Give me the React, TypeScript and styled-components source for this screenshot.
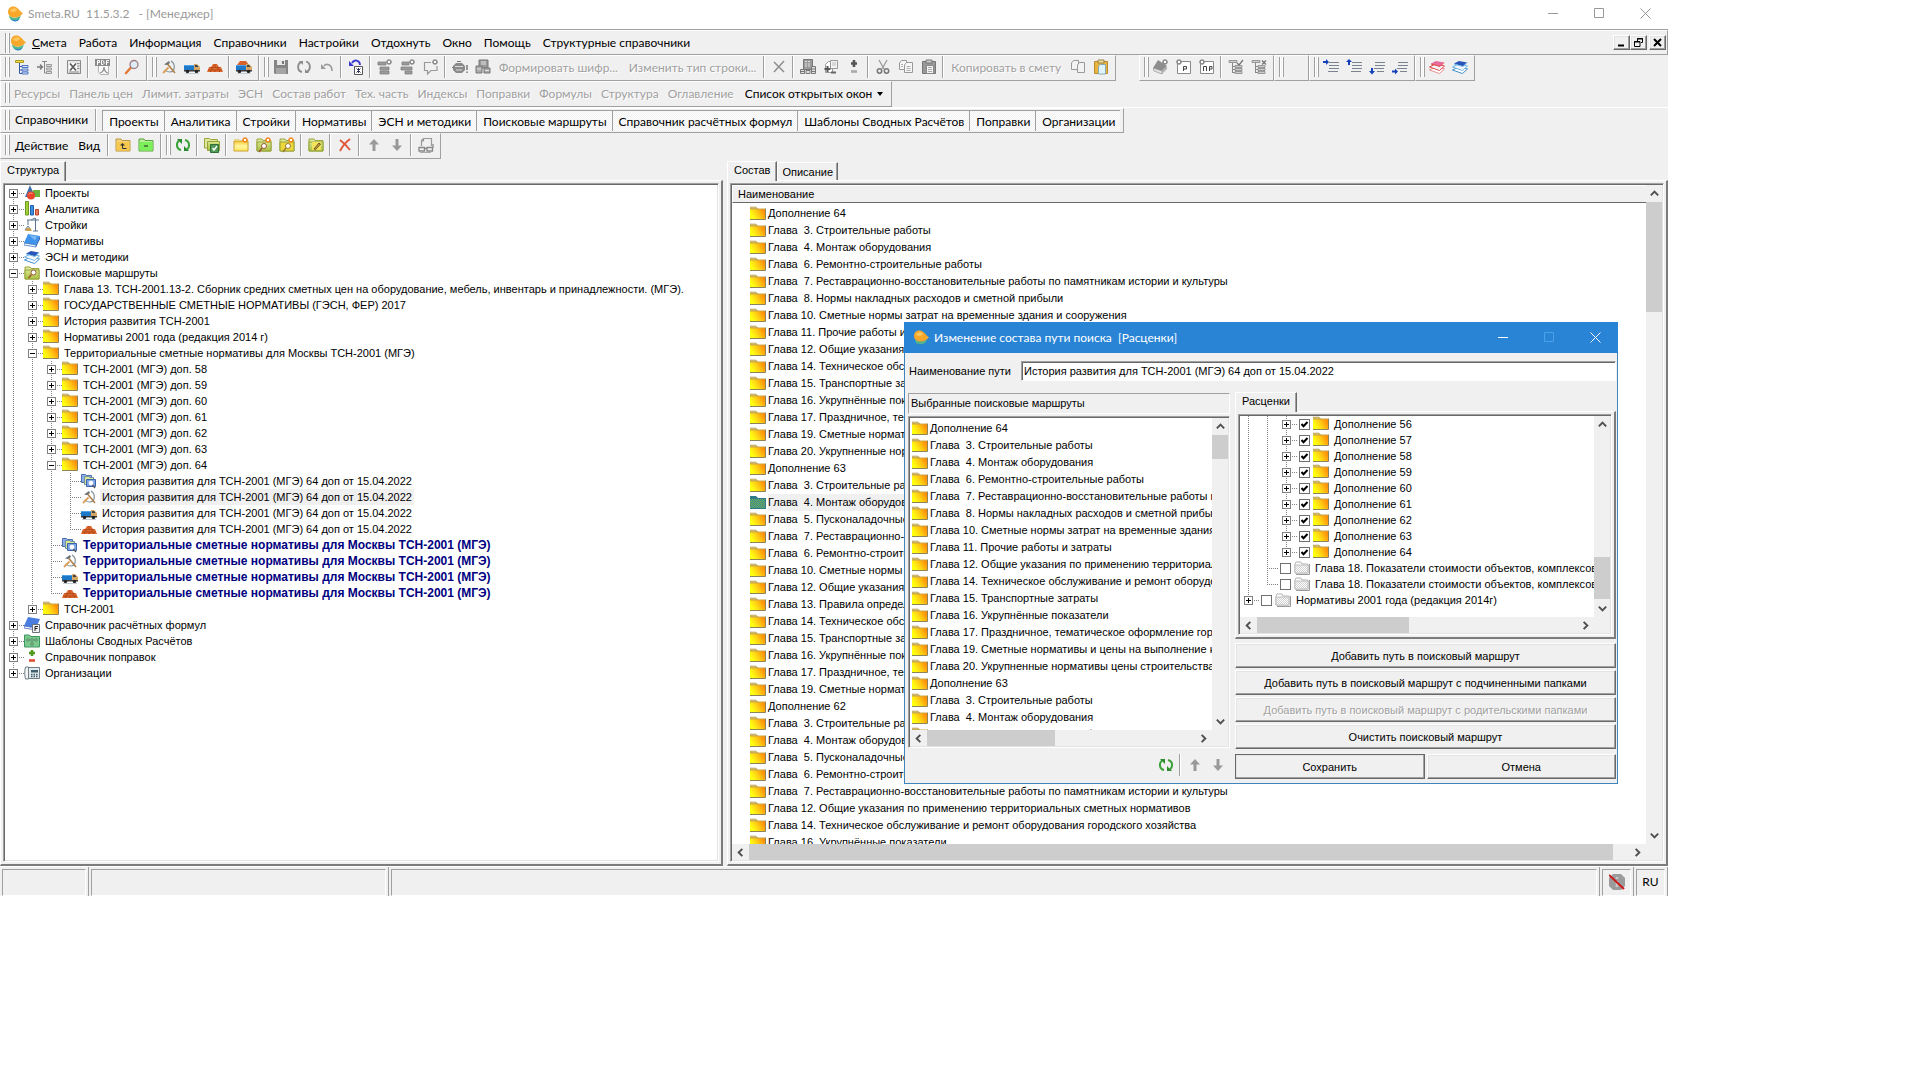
import React from "react";
import styled, { createGlobalStyle, css } from "styled-components";

const FACE = "#f0f0f0";
const SHADOW = "#a0a0a0";
const DARK = "#696969";
const LIGHT = "#e3e3e3";
const UI_FONT = '12px Lato, "Open Sans", sans-serif';
const LIST_FONT = '11px "Liberation Sans", Arial, sans-serif';

const GlobalStyle = createGlobalStyle`
  * { box-sizing: border-box; }
  body { margin: 0; background: #fff; color: #000; font: ${LIST_FONT}; }
  button, input { font: inherit; color: inherit; margin: 0; }
  button { border: 0; background: none; padding: 0; }
  ul { list-style: none; margin: 0; padding: 0; }
  svg { display: block; flex: none; }
`;

/* ------------------------------------------------------------------ icons */

const Spark = ({ x = 9, y = 0, c = "#f08a20" }: { x?: number; y?: number; c?: string }) => (
  <g stroke={c} strokeWidth="1.3">
    <path d={`M${x + 3} ${y}v6M${x} ${y + 3}h6M${x + 1} ${y + 1}l4 4M${x + 5} ${y + 1}l-4 4`} />
    <rect x={x + 2} y={y + 2} width="2" height="2" fill="#fff" stroke="none" />
  </g>
);

const GreenFolder = ({ fill = "url(#olive)" }: { fill?: string }) => (
  <>
    <path d="M1 14V2h5l1 1.500h8V14z" fill="#dfe89a" stroke="#9aa63c" strokeWidth="1" />
    <path d="M1 14V5h14v9z" fill={fill} stroke="#97a23a" strokeWidth="1" />
  </>
);

const Truck = () => (
  <>
    <path d="M0 6h10v5H0z" fill="#1d78c8" />
    <path d="M0 6h10v1H0z" fill="#4fa4e8" />
    <path d="M10 5h3l3 3v4h-6z" fill="#d9a765" />
    <path d="M11 6h2l1.500 2H11z" fill="#37424c" />
    <path d="M0 11h16v1.500H0z" fill="#3d3d3d" />
    <circle cx="3.500" cy="12.500" r="1.700" fill="#222" />
    <circle cx="12.500" cy="12.500" r="1.700" fill="#222" />
    <path d="M1 14.500h14" stroke="#c2cad0" />
  </>
);

const Lines = ({ dx = 5 }: { dx?: number }) => (
  <path d={`M${dx} 3.500h${16 - dx}M6 6.500h10M6 9.500h10M5 12.500h10`} stroke="#7d8290" />
);

const Stack = ({ a, b, c }: { a: string; b: string; c: string }) => (
  <>
    <path d="M.500 11l6-3 9 2-5 4.500z" fill="#fff" stroke={c} />
    <path d="M.500 8l6-3 9 2-5 4.500z" fill="#f4f6fa" stroke={b} />
    <path d="M2 4.500L7 2l8 1.500-4 4z" fill={a} />
    <path d="M2 5l9 2.500 4-4" fill="none" stroke={b} />
  </>
);

const StackedBoxes = () => (
  <>
    <path d="M1 1.500h8v2H1z" fill="#ccc" stroke="#888" strokeWidth=".8" />
    <path d="M4.500 4v10M4.500 7.500H7M4.500 10.500H7M4.500 13.500H7" fill="none" stroke="#888" />
    <path d="M7 6.500h7v2H7zM7 9.500h7v2H7zM7 12.500h7v2H7z" fill="#ccc" stroke="#888" strokeWidth=".8" />
  </>
);

const ICONS: Record<string, React.ReactNode> = {
  logo: (
    <>
      <path d="M2 9c2 3 8 4 12 0-1 4-3 6-6 6-4 0-6-3-6-6z" fill="#54b98a" />
      <path d="M4 13c3 1.500 6 1.500 9-1-1 2.500-3 3.500-5 3.500s-3-1-4-2.500z" fill="#2f86c9" />
      <path d="M1 6c0-4 3-6 6-5.500 4 .5 5 4 9 7-2 1.500-4 4-8 4S1 9.500 1 6z" fill="#f8a72b" />
      <path d="M3 5c1-3 5-3.500 7-1.500C9 6 6 7 3 5z" fill="#ffc65e" />
    </>
  ),
  folder: (
    <>
      <path d="M0 3V1h6l2 2z" fill="#d9c37b" stroke="#b59f5a" strokeWidth=".6" />
      <path d="M0 3h15v10H0z" fill="url(#fold)" />
      <path d="M0 3h15" stroke="#c9a646" />
      <path d="M15.500 2.500V13.500H0" fill="none" stroke="#8b8458" />
    </>
  ),
  folderSelected: (
    <>
      <path d="M0 3V1h6l2 2h8v11H0z" fill="#2e7a88" />
      <path d="M0 4h15v9H0z" fill="url(#selDither)" />
    </>
  ),
  folderGray: (
    <>
      <path d="M1 4l1-2h5l1 2h6v9H1z" fill="#fff" stroke="#b4b4b4" />
      <path d="M1 5h13v8H1z" fill="url(#grayDither)" stroke="#c0c0c0" />
      <path d="M15.500 4v10.500H2" fill="none" stroke="#9a9a9a" />
    </>
  ),
  projects: (
    <>
      <path d="M6 0l5 12H1z" fill="#3f6fa8" />
      <path d="M9 5h7v7H9z" fill="#6cb33f" />
      <circle cx="7" cy="10.500" r="4" fill="#e8452c" />
      <path d="M4.500 9.500a3 3 0 0 1 4-1" stroke="#f79a84" fill="none" />
    </>
  ),
  analytics: (
    <>
      <path d="M1.500.500h3V14h-3z" fill="#a3cf3b" stroke="#6d9a1e" />
      <path d="M6.500 4.500h3V14h-3z" fill="#3f8fe0" stroke="#1e62ad" />
      <path d="M11.500 8.500h3V14h-3z" fill="#ef7b5c" stroke="#b9472c" />
    </>
  ),
  crane: (
    <>
      <path d="M3 3h12M11.500 1v13M9 14h5M4 3v5M4 9l-3 4M4 9l3 4M11 1L7 3" stroke="#5e7590" fill="none" />
      <path d="M1 14h7l-2-3H3z" fill="#c9a24c" />
    </>
  ),
  book: (
    <>
      <path d="M4 1l12 2-4 9-12-2z" fill="#3f93ea" />
      <path d="M0 10l12 2v2L0 12z" fill="#fff" stroke="#2a66b8" strokeWidth=".7" />
      <path d="M12 12l4-9v3l-4 8z" fill="#1d5bb0" />
      <path d="M5 2l8 1.500-2 4z" fill="#7bb9f7" />
    </>
  ),
  bookF: (
    <>
      <path d="M4 0l12 2-4 9-12-2z" fill="#4a7de0" />
      <path d="M0 9l12 2v2L0 11z" fill="#fff" stroke="#2a4fb8" strokeWidth=".7" />
      <path d="M8.500 7.500h7v8h-7z" fill="#f4f4f4" stroke="#68717c" />
      <path d="M11 14V9.500h3M11 11.500h2.500" stroke="#222" fill="none" />
    </>
  ),
  stackBlue: <Stack a="#2a55b8" b="#6fb4e6" c="#3f8ccc" />,
  stackPink: <Stack a="#e86a9c" b="#e04848" c="#e59292" />,
  searchFolder: (
    <>
      <GreenFolder />
      <circle cx="9.500" cy="7.500" r="2.500" fill="#fff" stroke="#9a5a38" />
      <path d="M7.500 9.500l-3 3.500" stroke="#9a5a38" strokeWidth="1.500" />
    </>
  ),
  templates: (
    <>
      <path d="M.500 14V2h5l1 1.500h9V14z" fill="#7cc98e" stroke="#3f9660" />
      <path d="M3 6h2v2H3zM7 6h2v2H7zM11 6h2v2h-2zM7 10h2v2H7z" fill="#fff" stroke="#2b6e47" strokeWidth=".8" />
    </>
  ),
  plusMinus: (
    <>
      <path d="M8 1v6M5 4h6" stroke="#4d9a1e" strokeWidth="2.600" />
      <path d="M5 11.500h6" stroke="#df4b36" strokeWidth="2.600" />
    </>
  ),
  plusMinusGray: (
    <>
      <path d="M8 1v7M5 4.500h6" stroke="#555" strokeWidth="2.600" />
      <path d="M5 12.500h6" stroke="#a9a9a9" strokeWidth="2.600" />
    </>
  ),
  phone: (
    <>
      <path d="M4.500 2.500h11v11h-11z" fill="#e4ebee" stroke="#6d7d86" />
      <path d="M1.500 2c-1 4-1 8 0 12h3V2z" fill="#f5f5f5" stroke="#6d7d86" />
      <path d="M7 5h7v2.500H7z" fill="#3f5f6e" />
      <path d="M7 9.500h7M7 11.500h7" stroke="#3f5f6e" strokeDasharray="1.500 1" strokeWidth="1.500" />
    </>
  ),
  routes: (
    <>
      <path d="M.500 9.500v-8h4l1 1h5v7z" fill="#8eb0e6" stroke="#4a6eb0" />
      <path d="M3.500 11.500v-8h4l1 1h4v7z" fill="#dce88e" stroke="#6e90a0" />
      <path d="M5.500 13.500v-7h9v7z" fill="#7fa6e4" stroke="#3c64ac" />
      <circle cx="10" cy="10" r="2.300" fill="#fff" />
      <path d="M11.500 12l2.500 3" stroke="#555" strokeWidth="1.300" />
    </>
  ),
  hammer: (
    <>
      <path d="M10 2c5 3 4 11-1 11-3 0-4-1-5.500-2" fill="none" stroke="#84929a" strokeWidth="1.200" />
      <path d="M2 14l5.500-5.500" stroke="#d9a05a" strokeWidth="1.800" />
      <path d="M6.500 5l7.500 9" stroke="#b08048" strokeWidth="1.600" />
      <path d="M3 5.500L8 2l1 2-3 2z" fill="#6b7478" />
    </>
  ),
  truck: <Truck />,
  truckBricks: (
    <>
      <path d="M4 2h6l3 4H1z" fill="#d8622a" />
      <Truck />
    </>
  ),
  bricks: (
    <>
      <path d="M6 5h4l2 3h2l2 5H0l2-5h2z" fill="#df6a2c" />
      <path d="M3 8.500h10M1 11h14M8 5v3M5 9v2M11 9v2M3.500 11v2M8 11v2M12.500 11v2" stroke="#a8431a" strokeWidth=".8" />
    </>
  ),
  tree: (
    <>
      <path d="M1.500 1.500h8v2h-8z" fill="#f5e33c" stroke="#a89a28" />
      <path d="M5.500 4v10.500H8M5.500 7.500H8M5.500 11H8" fill="none" stroke="#3558a8" />
      <path d="M8 6.500h6v2H8zM8 10h6v2H8zM8 13h6v2H8z" fill="#dce8fa" stroke="#3f69bc" strokeWidth=".9" />
    </>
  ),
  treeArrow: (
    <>
      <path d="M0 8h5M3 5.500L5.500 8 3 10.500" stroke="#777" fill="none" strokeWidth="1.300" />
      <path d="M5 2.500h5M7.500 3v11h2" stroke="#888" fill="none" />
      <path d="M9.500 5.500h5v2h-5zM9.500 9h5v2h-5zM9.500 12.500h5v2h-5z" fill="#ddd" stroke="#999" />
    </>
  ),
  excel: (
    <>
      <path d="M1.500 1.500h13v13h-13z" fill="#e6e6e6" stroke="#8a8a8a" />
      <path d="M3 4h8v8H3z" fill="#fff" />
      <path d="M4 4.500l6 7M10 4.500l-6 7" stroke="#5d5d5d" strokeWidth="1.800" />
      <path d="M11 4.500h2.500M11 7h2.500M11 9.500h2.500M3 13h10" stroke="#8d8d8d" />
    </>
  ),
  pdf: (
    <>
      <path d="M3.500 6.500h10v9h-8l-2-2z" fill="#fafafa" stroke="#b4b4b4" />
      <path d="M0 0h15v7H0z" fill="#8a8a8a" />
      <path d="M2.500 6V1.500h2v2h-2M6.500 1.500h1l1.500 1v2l-1 1H6.500zM11.500 6V1.500H14M11.500 3.500H13.500" stroke="#fff" fill="none" />
      <path d="M5 14c3-1 4-4 4-6 0 3 2 6 4 6" stroke="#888" fill="none" strokeWidth="1.200" />
    </>
  ),
  magnifier: (
    <>
      <path d="M2 14l5-5.500" stroke="#e27a3a" strokeWidth="2.600" strokeLinecap="round" />
      <circle cx="10" cy="5.500" r="4" fill="#dcecf8" stroke="#a27a82" strokeWidth="1.300" />
    </>
  ),
  save: (
    <>
      <path d="M1 1h14v14H2l-1-1z" fill="#858585" />
      <path d="M4 1h8v5H4z" fill="#e8e8e8" />
      <path d="M9 2h2v3H9z" fill="#777" />
      <path d="M3 9h10v6H3z" fill="#a5a5a5" />
    </>
  ),
  reloadGray: (
    <>
      <path d="M6 13C1 12 1 5 5 3M10 2.500c5 1.500 5 8 1 10.500" fill="none" stroke="#8a8a8a" strokeWidth="1.800" />
      <path d="M3 2h4v4zM13 14H9v-4z" fill="#8a8a8a" />
    </>
  ),
  reload: (
    <>
      <path d="M6 13C1 12 1 6 4 3.500M10 3c5 1 5 7 2 9.500" fill="none" stroke="#3da23a" strokeWidth="2" />
      <path d="M2 2h5v5zM14 14H9V9z" fill="#2c8c2c" />
    </>
  ),
  undo: (
    <>
      <path d="M5 7c2-3 8-2 8 5" fill="none" stroke="#9a9a9a" strokeWidth="1.600" />
      <path d="M2 5v5h5z" fill="#9a9a9a" />
    </>
  ),
  undoDoc: (
    <>
      <path d="M4 4c2-4 8-3 8 2" fill="none" stroke="#3a3ad0" strokeWidth="1.800" />
      <path d="M1 2v5h5z" fill="#3a3ad0" />
      <path d="M6.500 7.500h8v8h-8z" fill="#fff" stroke="#555" />
      <path d="M8.500 9.500l4 4M12.500 9.500l-4 4M10.500 9v5" stroke="#335" />
    </>
  ),
  stackStar: (
    <>
      <path d="M1 3h8v3H1zM3 8h9v3H3zM3 12h9v3H3z" fill="#9a9a9a" stroke="#808080" strokeWidth=".8" />
      <Spark c="#8c8c8c" />
    </>
  ),
  stackStar2: (
    <>
      <path d="M2 3h7v3H2zM1 8h11v3H1zM5 12h7v3H5z" fill="#9a9a9a" stroke="#808080" strokeWidth=".8" />
      <Spark c="#8c8c8c" />
    </>
  ),
  bubble: (
    <>
      <path d="M8 3.500H1.500v8h3V15l3.500-3.500h6V7" fill="none" stroke="#999" strokeWidth="1.200" />
      <Spark c="#8c8c8c" />
    </>
  ),
  barrel: (
    <>
      <path d="M1 7l3-3h6l3 3v4l-3 3H4l-3-3z" fill="#8a8a8a" />
      <path d="M3 7.500h8M4 11h6" stroke="#dcdcdc" />
      <path d="M0 8.500h2M5 2.500h4" stroke="#777" />
      <path d="M15 6v5M15 12.500v1.500" stroke="#777" strokeWidth="1.500" />
    </>
  ),
  machine: (
    <>
      <path d="M4 1h9v8H4z" fill="#999" stroke="#777" />
      <path d="M1 7h6v7H1zM9 9h6v5H9z" fill="#ababab" stroke="#777" />
      <path d="M6 3h5M6 5h5M2 10h4M10 11.500h4" stroke="#e2e2e2" />
    </>
  ),
  crossGray: <path d="M3 3l10 10M13 2L3 13" stroke="#8f8f8f" strokeWidth="1.500" />,
  crossRed: <path d="M3 3c4 3 7 6 10 10M13 2C9 5 5 10 3 14" fill="none" stroke="#e0583a" strokeWidth="1.900" />,
  calc: (
    <>
      <path d="M3.500.500h9v10h-9z" fill="#9b9b9b" stroke="#777" />
      <path d="M5 2.500h6M5 5h6M5 7h6" stroke="#ddd" strokeDasharray="2 1" />
      <path d="M.500 10.500h4v4h-4zM6 11.500h4v3H6zM11.500 7.500h4v7h-4zM.500 12.500h4M11.500 10h4M11.500 12.500h4" fill="#e0e0e0" stroke="#777" />
    </>
  ),
  docPlus: (
    <>
      <path d="M2.500 5.500l3-3h4v11h-7z" fill="#fff" stroke="#999" />
      <path d="M7.500 1.500h7v8h-7z" fill="#f4f4f4" stroke="#999" />
      <path d="M9 4h4M9 6h4" stroke="#bbb" />
      <path d="M4.500 7v6M1.500 10h6" stroke="#555" strokeWidth="2" />
      <path d="M8 13.500h5" stroke="#666" strokeWidth="2" />
    </>
  ),
  cut: (
    <>
      <path d="M4 1l5 9M12 1L7 10" stroke="#999" strokeWidth="1.300" />
      <circle cx="4.500" cy="12" r="2.200" fill="none" stroke="#777" strokeWidth="1.500" />
      <circle cx="11.500" cy="12" r="2.200" fill="none" stroke="#777" strokeWidth="1.500" />
    </>
  ),
  copy: (
    <>
      <path d="M1.500 4l2-2.500h5v9h-7z" fill="#f7f7f7" stroke="#999" />
      <path d="M6.500 6l2-2.500h6v10h-8z" fill="#f7f7f7" stroke="#999" />
      <path d="M8.500 7.500h4M8.500 9.500h4M8.500 11.500h4M3 5.500h2M3 7.500h2" stroke="#b0b0b0" />
    </>
  ),
  copyBlank: (
    <>
      <path d="M1.500 4l2-2.500h5v9h-7z" fill="#f3f3f3" stroke="#999" />
      <path d="M7.500 6l2-2.500h5v10h-7z" fill="#f3f3f3" stroke="#999" />
    </>
  ),
  pasteGray: (
    <>
      <path d="M1.500 2.500h13v12h-13z" fill="#999" stroke="#777" />
      <path d="M5 1h6v3H5z" fill="#ccc" stroke="#777" />
      <path d="M5.500 6.500h7v8h-7z" fill="#f4f4f4" stroke="#888" />
      <path d="M7 8.500h4M7 10.500h4M7 12.500h4" stroke="#aaa" />
    </>
  ),
  paste: (
    <>
      <path d="M1.500 2.500h13v12h-13z" fill="#e9b53c" stroke="#b98a2e" />
      <path d="M5 1h6v3H5z" fill="#f0dc9a" stroke="#9a8648" />
      <path d="M5.500 7l2-1.500h5V15h-7z" fill="#dff4fa" stroke="#86aab6" />
    </>
  ),
  bookGray: (
    <>
      <path d="M5 1l9 6-5 5-9-3z" fill="#8d8d8d" />
      <path d="M0 9l9 3v3l-8-3z" fill="#e6e6e6" stroke="#999" strokeWidth=".8" />
      <path d="M9 12l5-5v3l-5 5z" fill="#b0b0b0" />
      <Spark c="#8c8c8c" />
    </>
  ),
  letterP: (
    <>
      <path d="M1.500 2.500h13v12h-13z" fill="#fff" stroke="#8a8a8a" />
      <path d="M7.500 12V7.500h3v2.500h-3" fill="none" stroke="#444" />
      <Spark x={0} c="#8c8c8c" />
    </>
  ),
  letterPP: (
    <>
      <path d="M1.500 2.500h13v12h-13z" fill="#fff" stroke="#8a8a8a" />
      <path d="M4.500 12V7.500h3V12M10.500 12V7.500h2.500v2.500h-2.500" fill="none" stroke="#444" />
      <Spark x={0} c="#8c8c8c" />
    </>
  ),
  treeCheck: (
    <>
      <StackedBoxes />
      <path d="M9 4l2 2 4-5" fill="none" stroke="#777" strokeWidth="1.300" />
    </>
  ),
  treeCross: (
    <>
      <StackedBoxes />
      <path d="M11 1.500l4 4M15 1.500l-4 4" stroke="#777" strokeWidth="1.300" />
    </>
  ),
  indentRight: (
    <>
      <Lines dx={6} />
      <path d="M0 3h4" stroke="#1440b8" strokeWidth="2" />
      <path d="M3 0v6l3-3z" fill="#1440b8" />
    </>
  ),
  indentUp: (
    <>
      <Lines dx={6} />
      <path d="M3 2v4" stroke="#1440b8" strokeWidth="2" />
      <path d="M0 3h6L3 0z" fill="#1440b8" />
    </>
  ),
  indentDown: (
    <>
      <path d="M6 3.500h10M6 6.500h10M5 9.500h10M8 12.500h7" stroke="#7d8290" />
      <path d="M3 9v4" stroke="#1440b8" strokeWidth="2" />
      <path d="M0 12h6l-3 3.500z" fill="#1440b8" />
    </>
  ),
  indentLast: (
    <>
      <path d="M6 3.500h10M6 6.500h10M5 9.500h10M8 12.500h7" stroke="#7d8290" />
      <path d="M0 12.500h4" stroke="#1440b8" strokeWidth="2" />
      <path d="M3 9.500v6l3-3z" fill="#1440b8" />
    </>
  ),
  folderUp: (
    <>
      <path d="M1 14V2h5l1 1.500h8V14z" fill="#f3d47c" stroke="#b9963c" />
      <path d="M1.500 5h13v8.500h-13z" fill="#f7c850" />
      <path d="M7.500 7v4.500h4" fill="none" stroke="#333" />
      <path d="M5 8.500L7.500 6l2.500 2.500z" fill="#333" />
    </>
  ),
  folderMinus: (
    <>
      <path d="M1 14V2h5l1 1.500h8V14z" fill="#b8f09a" stroke="#58a03c" />
      <path d="M1.500 5h13v8.500h-13z" fill="#7cf05a" />
      <path d="M6 9h4" stroke="#222" />
    </>
  ),
  folderCheck: (
    <>
      <path d="M.500 11V1.500h5l1 1h7V11z" fill="#dfe89a" stroke="#9aa63c" />
      <path d="M3.500 13.500v-9h12v9z" fill="url(#olive)" stroke="#97a23a" />
      <path d="M6.500 7.500h8v8h-8z" fill="#4f9a55" stroke="#2f6e38" />
      <path d="M8.500 11l1.500 2 3-4" fill="none" stroke="#fff" strokeWidth="1.400" />
    </>
  ),
  folderNew: (
    <>
      <path d="M1 14V4h14v10z" fill="url(#fold2)" stroke="#c9a030" />
      <path d="M1 4V2h5l1 2z" fill="#e6d48a" />
      <Spark />
    </>
  ),
  folderFind: (
    <>
      <GreenFolder />
      <circle cx="8" cy="9" r="2.500" fill="#fff" stroke="#9a5a38" />
      <path d="M6 11l-3 4" stroke="#9a5a38" strokeWidth="1.500" />
      <Spark />
    </>
  ),
  folderFindYellow: (
    <>
      <GreenFolder fill="#ecd63a" />
      <circle cx="9" cy="9" r="2.500" fill="#fff" stroke="#9a7a38" />
      <path d="M7 11l-3 4" stroke="#9a7a38" strokeWidth="1.500" />
      <Spark />
    </>
  ),
  folderEdit: (
    <>
      <GreenFolder />
      <path d="M4 5h9v8H4z" fill="#f0e25a" />
      <path d="M6 12l5-6 1.500 1-5 5.500z" fill="#e8a030" stroke="#3c3c20" strokeWidth=".8" />
    </>
  ),
  up: <path d="M8 2l5 5.500h-3.500V14h-3V7.500H3z" fill="#999" />,
  down: <path d="M8 14L3 8.500h3.500V2h3v6.500H13z" fill="#999" />,
  glasses: (
    <>
      <path d="M3.500 9V3.500l2-2h8V9M5.500 2v2h-2" fill="none" stroke="#999" strokeWidth="1.200" />
      <path d="M1 10.500h5.500v3.500H1zM9 10.500h5.500v3.500H9zM6.500 11.500H9M15 7v4" fill="none" stroke="#888" strokeWidth="1.300" />
      <path d="M2 15.500h11" stroke="#aaa" />
    </>
  ),
  noInfo: (
    <>
      <path d="M4 0h8l4 4v8l-4 4H4l-4-4V4z" fill="#9b9b9b" />
      <path d="M8 3v2M8 7v6" stroke="#c8c8c8" strokeWidth="2.500" />
      <path d="M0 1l15 14" stroke="#cc1818" strokeWidth="2" />
    </>
  ),
};

const Icon = ({ name }: { name: string }) => (
  <svg width="16" height="16" viewBox="0 0 16 16" aria-hidden="true">
    {ICONS[name]}
  </svg>
);

const Defs = styled.svg`
  position: absolute;
  width: 0;
  height: 0;
`;

/* ----------------------------------------------------------------- frames */

const raised = css`
  border: 1px solid;
  border-color: #fff ${DARK} ${DARK} #fff;
  box-shadow: inset -1px -1px 0 ${SHADOW}, inset 1px 1px 0 ${LIGHT};
  background: ${FACE};
`;

const Sunken = styled.div`
  flex: 1;
  min-height: 0;
  min-width: 0;
  display: flex;
  padding: 1px;
  background: #fff;
  border: 1px solid;
  border-color: ${SHADOW} #fff #fff ${SHADOW};
  box-shadow: inset 1px 1px 0 ${DARK}, inset -1px -1px 0 ${LIGHT};
`;

const Window = styled.div`
  position: relative;
  display: flex;
  flex-direction: column;
  width: calc(100vw - 252px);
  height: calc(100vh - 184px);
  background: ${FACE};
  overflow: hidden;
`;

const TitleBar = styled.header`
  flex: none;
  display: flex;
  align-items: center;
  height: 30px;
  padding: 0 0 2px 7px;
  background: #fff;
  border-bottom: 1px solid ${SHADOW};
  color: #999;
  font: ${UI_FONT};
  white-space: pre;
`;

const Caption = styled.h1`
  flex: 1;
  margin: 0;
  padding-left: 5px;
  font: inherit;
`;

const WindowButton = styled.button`
  width: 46px;
  height: 100%;
  display: grid;
  place-items: center;
`;

const MenuBar = styled.nav`
  flex: none;
  display: flex;
  align-items: center;
  height: 25px;
  padding: 0 1px 0 5px;
  border: solid;
  border-width: 1px 1px 1px 0;
  border-color: #fff ${SHADOW} ${SHADOW};
  font: ${UI_FONT};
`;

const MenuItem = styled.button`
  padding: 0 6px;
  white-space: nowrap;
`;

const MdiButtons = styled.div`
  margin-left: auto;
  display: flex;
`;

const MdiButton = styled.button<{ $apart?: boolean }>`
  ${raised}
  width: 17px;
  height: 15px;
  margin-left: ${(p) => (p.$apart ? 2 : 0)}px;
  display: grid;
  place-items: center;
`;

const Grip = styled.span`
  flex: none;
  width: 5px;
  height: 20px;
  border: solid ${SHADOW};
  border-width: 0 1px;
  box-shadow: inset 1px 0 0 #fff, inset -1px 0 0 #fff;
`;

const ToolRow = styled.div<{ $line?: boolean }>`
  flex: none;
  display: flex;
  height: 26px;
  border-top: ${(p) => (p.$line ? "1px solid #fff" : "0")};
  font: ${UI_FONT};
`;

const ToolGroup = styled.div<{ $gap?: boolean }>`
  display: flex;
  align-items: center;
  padding: 0 3px 2px 4px;
  border: 1px solid;
  border-color: #fff ${SHADOW} ${SHADOW} #fff;
  margin-left: ${(p) => (p.$gap ? 23 : 0)}px;
`;

const ToolButton = styled.button`
  flex: none;
  width: 23px;
  height: 22px;
  display: grid;
  place-items: center;
`;

const TextButton = styled.button<{ $pad?: number }>`
  padding: 0 5px 0 ${(p) => p.$pad ?? 5}px;
  white-space: nowrap;
  &:disabled {
    color: #a0a0a0;
    text-shadow: 1px 1px 0 #fff;
  }
`;

const Separator = styled.span`
  flex: none;
  width: 2px;
  height: 22px;
  margin: 0 2px;
  border-left: 1px solid ${SHADOW};
  border-right: 1px solid #fff;
`;

const EmptySlot = styled.span`
  width: 21px;
`;

const Caret = styled.span`
  display: inline-block;
  margin-left: 5px;
  vertical-align: 2px;
  border: solid transparent;
  border-width: 4px 3px 0;
  border-top-color: #000;
`;

const HatchTabs = styled.div`
  align-self: flex-start;
  display: flex;
  margin: 1px 0 0 3px;
`;

const HatchTab = styled.button`
  height: 21px;
  padding: 1px 5px 0 6px;
  border: solid ${SHADOW};
  border-width: 1px 0 0 1px;
  background: repeating-conic-gradient(#fff 0 25%, ${FACE} 0 50%) 0 0 / 2px 2px;
  white-space: nowrap;
`;

const Panels = styled.main`
  flex: 1;
  min-height: 0;
  display: grid;
  grid-template-columns: 723fr 941fr;
  gap: 4px;
`;

const Panel = styled.section`
  min-width: 0;
  min-height: 0;
  display: flex;
  flex-direction: column;
`;

const TabStrip = styled.div<{ $h?: number }>`
  flex: none;
  display: flex;
  align-items: flex-end;
  height: ${(p) => p.$h ?? 21}px;
`;

const Tab = styled.button<{ $on?: boolean }>`
  position: relative;
  height: ${(p) => (p.$on ? 20 : 18)}px;
  margin-bottom: ${(p) => (p.$on ? -1 : 0)}px;
  padding: 0 ${(p) => (p.$on ? 6 : 4)}px ${(p) => (p.$on ? 4 : 0)}px;
  border: solid;
  border-width: 1px 1px 0;
  border-color: #fff ${DARK} #fff #fff;
  box-shadow: inset -1px 0 0 ${SHADOW};
  background: ${FACE};
`;

const Frame = styled.div`
  flex: 1;
  min-height: 0;
  display: flex;
  padding: 2px;
  border: solid;
  border-width: 1px 2px 2px 1px;
  border-color: #fff #7c7c7c #7c7c7c #fff;
`;

/* -------------------------------------------------------------- scrollbar */

const Scroll = styled.div<{ $vertical?: boolean }>`
  display: flex;
  flex-direction: ${(p) => (p.$vertical ? "column" : "row")};
  background: ${FACE};
  overflow: hidden;
`;

const ScrollButton = styled.button`
  flex: 0 0 17px;
  display: grid;
  place-items: center;
`;

const Track = styled.span<{ $grow: number; $thumb?: boolean }>`
  flex: ${(p) => p.$grow} 1 0;
  background: ${(p) => (p.$thumb ? "#cdcdcd" : "transparent")};
`;

const CHEVRONS = { up: "M1.500 6l3-3 3 3", down: "M1.500 3l3 3 3-3", left: "M6 1.500l-3 3 3 3", right: "M3 1.500l3 3-3 3" };

const Chevron = ({ to }: { to: keyof typeof CHEVRONS }) => (
  <svg width="11" height="11" viewBox="0 0 9 9" aria-hidden="true">
    <path d={CHEVRONS[to]} fill="none" stroke="#505050" strokeWidth="1.600" />
  </svg>
);

const ScrollBar = ({ vertical, parts }: { vertical?: boolean; parts: [number, number, number] }) => (
  <Scroll $vertical={vertical}>
    <ScrollButton aria-label={vertical ? "Вверх" : "Влево"}>
      <Chevron to={vertical ? "up" : "left"} />
    </ScrollButton>
    <Track $grow={parts[0]} />
    <Track $grow={parts[1]} $thumb />
    <Track $grow={parts[2]} />
    <ScrollButton aria-label={vertical ? "Вниз" : "Вправо"}>
      <Chevron to={vertical ? "down" : "right"} />
    </ScrollButton>
  </Scroll>
);

const ScrollArea = styled.div`
  flex: 1;
  min-width: 0;
  min-height: 0;
  display: grid;
  grid-template: minmax(0, 1fr) 16px / minmax(0, 1fr) 16px;
`;

const Corner = styled.span`
  background: ${FACE};
`;

const Viewport = styled.div`
  min-width: 0;
  min-height: 0;
  overflow: hidden;
  background: #fff;
`;

/* ------------------------------------------------------------------- list */

const ColumnHeader = styled.div`
  height: 18px;
  padding: 0 5px;
  line-height: 17px;
  background: ${FACE};
  border: solid;
  border-width: 1px 0 1px 1px;
  border-color: #fff #fff ${DARK} #fff;
`;

const Rows17 = styled.ul<{ $indent: number }>`
  padding: 2px 0 0 ${(p) => p.$indent}px;
`;

const ListRow = styled.li`
  display: flex;
  align-items: center;
  gap: 2px;
  height: 17px;
  white-space: pre;
`;

const ListLabel = styled.span<{ $on?: boolean }>`
  padding-right: 1px;
  line-height: 17px;
  background: ${(p) => (p.$on ? FACE : "transparent")};
`;

const FolderList = ({ items, indent, selected }: { items: string[]; indent: number; selected?: number }) => (
  <Rows17 $indent={indent}>
    {items.map((text, i) => (
      <ListRow key={i}>
        <Icon name={i === selected ? "folderSelected" : "folder"} />
        <ListLabel $on={i === selected}>{text}</ListLabel>
      </ListRow>
    ))}
  </Rows17>
);

/* ------------------------------------------------------------------- tree */

type Guide = "line" | "tee" | "end" | "first" | "none";

const V = "repeating-linear-gradient(to bottom, #808080 0 1px, transparent 1px 2px)";
const H = "repeating-linear-gradient(to right, #808080 0 1px, transparent 1px 2px)";
const GUIDES: Record<Guide, string> = {
  none: "none",
  line: `${V} 8px 0 / 1px 100% no-repeat`,
  tee: `${V} 8px 0 / 1px 100% no-repeat, ${H} 8px 8px / 11px 1px no-repeat`,
  end: `${V} 8px 0 / 1px 9px no-repeat, ${H} 8px 8px / 11px 1px no-repeat`,
  first: `${V} 8px 8px / 1px 8px no-repeat, ${H} 8px 8px / 11px 1px no-repeat`,
};

const Cell = styled.span<{ $g: Guide }>`
  flex: none;
  width: 19px;
  height: 16px;
  padding: 4px;
  background: ${(p) => GUIDES[p.$g]};
`;

const Expander = styled.button<{ $open?: boolean }>`
  display: block;
  width: 9px;
  height: 9px;
  border: 1px solid #808080;
  background: linear-gradient(#000, #000) 1px 3px / 5px 1px no-repeat,
    linear-gradient(#000, #000) 3px 1px / 1px ${(p) => (p.$open ? 0 : 5)}px no-repeat, #fff;
`;

const TreeRow = styled.li`
  display: flex;
  align-items: center;
  height: 16px;
  white-space: nowrap;
`;

const TreeLabel = styled.span<{ $on?: boolean; $strong?: boolean }>`
  margin-left: 3px;
  padding: 0 2px;
  line-height: 16px;
  background: ${(p) => (p.$on ? FACE : "transparent")};
  ${(p) =>
    p.$strong &&
    css`
      color: #000080;
      font-size: 12px;
      font-weight: bold;
    `}
`;

const CheckLabel = styled.label`
  display: flex;
  align-items: center;
`;

const Check = styled.input`
  appearance: none;
  width: 11px;
  height: 11px;
  margin: 0 3px 0 2px;
  border: 1px solid #707070;
  background: #fff;
  &:checked {
    background: #fff
      url("data:image/svg+xml,%3Csvg xmlns='http://www.w3.org/2000/svg' viewBox='0 0 9 9'%3E%3Cpath d='M1.500 4l2 2.200 4-4.200' fill='none' stroke='%23000' stroke-width='2'/%3E%3C/svg%3E");
  }
`;

interface Node {
  g: string;
  exp?: "+" | "-";
  icon: string;
  text: string;
  strong?: boolean;
  on?: boolean;
  check?: boolean;
}

const CODES: Record<string, Guide> = { "|": "line", t: "tee", e: "end", f: "first", " ": "none" };

const Tree = ({ nodes }: { nodes: Node[] }) => (
  <ul>
    {nodes.map((n, i) => {
      const content = (
        <>
          <Icon name={n.icon} />
          <TreeLabel $on={n.on} $strong={n.strong}>
            {n.text}
          </TreeLabel>
        </>
      );
      return (
        <TreeRow key={i}>
          {[...n.g].map((c, k) => (
            <Cell key={k} $g={CODES[c]}>
              {n.exp && k === n.g.length - 1 && (
                <Expander $open={n.exp === "-"} aria-label={n.exp === "-" ? "Свернуть" : "Развернуть"} />
              )}
            </Cell>
          ))}
          {n.check === undefined ? (
            content
          ) : (
            <CheckLabel>
              <Check type="checkbox" defaultChecked={n.check} />
              {content}
            </CheckLabel>
          )}
        </TreeRow>
      );
    })}
  </ul>
);

/* ----------------------------------------------------------------- dialog */

const Dialog = styled.section`
  position: absolute;
  left: 904px;
  top: 322px;
  width: 714px;
  height: 462px;
  display: flex;
  flex-direction: column;
  background: ${FACE};
  border: 1px solid #3c86bd;
`;

const DialogTitle = styled.header`
  flex: none;
  display: flex;
  align-items: center;
  height: 31px;
  margin: -1px -1px 0;
  padding-left: 9px;
  background: #2984d6;
  color: #fff;
  font: ${UI_FONT};
  white-space: pre;
`;

const DialogCaption = styled.h2`
  flex: 1;
  margin: 0;
  padding-left: 5px;
  font: inherit;
`;

const NameRow = styled.div`
  flex: none;
  display: flex;
  align-items: center;
  padding: 8px 1px 0 4px;
`;

const NameLabel = styled.label`
  width: 112px;
`;

const NameInput = styled.input`
  flex: 1;
  height: 20px;
  padding: 0 2px;
  border: 1px solid;
  border-color: ${SHADOW} #fff #fff ${SHADOW};
  box-shadow: inset 1px 1px 0 ${DARK};
  background: #fff;
  outline: 0;
`;

const Columns = styled.div`
  flex: 1;
  min-height: 0;
  display: grid;
  grid-template-columns: 322fr 381fr;
  gap: 5px;
  padding: 10px 1px 0 3px;
`;

const Column = styled.div<{ $top?: number }>`
  min-width: 0;
  min-height: 0;
  display: flex;
  flex-direction: column;
  padding-top: ${(p) => p.$top ?? 0}px;
`;

const RoutesHeader = styled.div`
  flex: none;
  height: 21px;
  margin-bottom: 2px;
  padding: 0 2px;
  line-height: 19px;
  border: 1px solid;
  border-color: ${SHADOW} #fff #fff ${SHADOW};
`;

const RouteTools = styled.div`
  flex: none;
  display: flex;
  align-items: center;
  justify-content: flex-end;
  height: 35px;
  padding: 0 1px 2px 0;
`;

const Actions = styled.div`
  flex: none;
  display: grid;
  gap: 2px;
  padding: 4px 0;
`;

const Confirm = styled.div`
  display: grid;
  grid-template-columns: 1fr 1fr;
  gap: 2px;
  margin-top: 3px;
`;

const PushButton = styled.button<{ $primary?: boolean }>`
  ${raised}
  height: 25px;
  outline: ${(p) => (p.$primary ? `1px solid ${DARK}` : "0")};
  outline-offset: -1px;
  &:disabled {
    color: #a0a0a0;
    text-shadow: 1px 1px 0 #fff;
  }
`;

/* ----------------------------------------------------------------- status */

const StatusBar = styled.footer`
  flex: none;
  display: flex;
  height: 30px;
  border-top: 1px solid #fff;
  font: ${UI_FONT};
`;

const StatusSlot = styled.div<{ $w?: number }>`
  flex: ${(p) => (p.$w ? `0 0 ${p.$w}px` : "1")};
  display: flex;
  padding: 2px 2px 0;
  border-right: 1px solid ${SHADOW};
`;

const StatusCell = styled.div`
  flex: 1;
  display: grid;
  place-items: center;
  padding-bottom: 2px;
  border: 1px solid;
  border-color: ${SHADOW} #fff #fff ${SHADOW};
`;

/* ------------------------------------------------------------------- data */

const g = (n: number, text: string) => `Глава ${n < 10 ? " " : ""}${n}. ${text}`;
const BUILD = g(3, "Строительные работы");
const MOUNT = g(4, "Монтаж оборудования");
const START = g(5, "Пусконаладочные работы");
const REPAIR = g(6, "Ремонтно-строительные работы");
const RESTORE = g(7, "Реставрационно-восстановительные работы по памятникам истории и культуры");
const OVERHEAD = g(8, "Нормы накладных расходов и сметной прибыли");
const TEMP = g(10, "Сметные нормы затрат на временные здания и сооружения");
const OTHER = g(11, "Прочие работы и затраты");
const GENERAL = g(12, "Общие указания по применению территориальных сметных нормативов");
const RULES = g(13, "Правила определения стоимости");
const SERVICE = g(14, "Техническое обслуживание и ремонт оборудования городского хозяйства");
const TRANSPORT = g(15, "Транспортные затраты");
const ENLARGED = g(16, "Укрупнённые показатели");
const FESTIVE = g(17, "Праздничное, тематическое оформление города");
const NORMS = g(19, "Сметные нормативы и цены на выполнение кадастровых работ");
const PRICES = g(20, "Укрупненные нормативы цены строительства");

const SET_64 = [
  "Дополнение 64", BUILD, MOUNT, REPAIR, RESTORE, OVERHEAD, TEMP, OTHER,
  GENERAL, SERVICE, TRANSPORT, ENLARGED, FESTIVE, NORMS, PRICES,
];

const CONTENTS = [
  ...SET_64,
  "Дополнение 63", BUILD, MOUNT, START, RESTORE, REPAIR, TEMP, GENERAL, RULES, SERVICE,
  TRANSPORT, ENLARGED, FESTIVE, NORMS,
  "Дополнение 62", BUILD, MOUNT, START, REPAIR, RESTORE, GENERAL, SERVICE, ENLARGED,
];

const ROUTES = [...SET_64, "Дополнение 63", BUILD, MOUNT, START];

const HISTORY = "История развития для ТСН-2001 (МГЭ) 64 доп от 15.04.2022";
const TERRITORIAL = "Территориальные сметные нормативы для Москвы ТСН-2001 (МГЭ)";

const STRUCTURE: Node[] = [
  { g: "f", exp: "+", icon: "projects", text: "Проекты" },
  { g: "t", exp: "+", icon: "analytics", text: "Аналитика" },
  { g: "t", exp: "+", icon: "crane", text: "Стройки" },
  { g: "t", exp: "+", icon: "book", text: "Нормативы" },
  { g: "t", exp: "+", icon: "stackBlue", text: "ЭСН и методики" },
  { g: "t", exp: "-", icon: "searchFolder", text: "Поисковые маршруты" },
  {
    g: "|t", exp: "+", icon: "folder",
    text: "Глава 13. ТСН-2001.13-2. Сборник средних сметных цен на оборудование, мебель, инвентарь и принадлежности. (МГЭ).",
  },
  { g: "|t", exp: "+", icon: "folder", text: "ГОСУДАРСТВЕННЫЕ СМЕТНЫЕ НОРМАТИВЫ (ГЭСН, ФЕР) 2017" },
  { g: "|t", exp: "+", icon: "folder", text: "История развития ТСН-2001" },
  { g: "|t", exp: "+", icon: "folder", text: "Нормативы 2001 года (редакция 2014 г)" },
  { g: "|t", exp: "-", icon: "folder", text: TERRITORIAL },
  ...[58, 59, 60, 61, 62, 63].map((n): Node => ({
    g: "||t", exp: "+", icon: "folder", text: `ТСН-2001 (МГЭ) доп. ${n}`,
  })),
  { g: "||t", exp: "-", icon: "folder", text: "ТСН-2001 (МГЭ) доп. 64" },
  { g: "|||t", icon: "routes", text: HISTORY },
  { g: "|||t", icon: "hammer", text: HISTORY, on: true },
  { g: "|||t", icon: "truck", text: HISTORY },
  { g: "|||e", icon: "bricks", text: HISTORY },
  { g: "||t", icon: "routes", text: TERRITORIAL, strong: true },
  { g: "||t", icon: "hammer", text: TERRITORIAL, strong: true },
  { g: "||t", icon: "truck", text: TERRITORIAL, strong: true },
  { g: "||e", icon: "bricks", text: TERRITORIAL, strong: true },
  { g: "|e", exp: "+", icon: "folder", text: "ТСН-2001" },
  { g: "t", exp: "+", icon: "bookF", text: "Справочник расчётных формул" },
  { g: "t", exp: "+", icon: "templates", text: "Шаблоны Сводных Расчётов" },
  { g: "t", exp: "+", icon: "plusMinus", text: "Справочник поправок" },
  { g: "e", exp: "+", icon: "phone", text: "Организации" },
];

const CHAPTER_18 = "Глава 18. Показатели стоимости объектов, комплексов работ";

const RATES: Node[] = [
  ...[56, 57, 58, 59, 60, 61, 62, 63, 64].map((n): Node => ({
    g: n === 64 ? "||e" : "||t", exp: "+", icon: "folder", text: `Дополнение ${n}`, check: true,
  })),
  { g: "|t", icon: "folderGray", text: CHAPTER_18, check: false },
  { g: "|e", icon: "folderGray", text: CHAPTER_18, check: false },
  { g: "e", exp: "+", icon: "folderGray", text: "Нормативы 2001 года (редакция 2014г)", check: false },
];

const MENU = ["Работа", "Информация", "Справочники", "Настройки", "Отдохнуть", "Окно", "Помощь", "Структурные справочники"];
const SECTIONS = [
  "Ресурсы", "Панель цен", "Лимит. затраты", "ЭСН", "Состав работ", "Тех. часть",
  "Индексы", "Поправки", "Формулы", "Структура", "Оглавление",
];
const BOOKS = [
  "Проекты", "Аналитика", "Стройки", "Нормативы", "ЭСН и методики", "Поисковые маршруты",
  "Справочник расчётных формул", "Шаблоны Сводных Расчётов", "Поправки", "Организации",
];

/* A "|" in the list stands for a separator between buttons. */
const Buttons = ({ names }: { names: string[] }) => (
  <>
    {names.map((n, i) =>
      n === "|" ? (
        <Separator key={i} />
      ) : (
        <ToolButton key={i} aria-label={n}>
          <Icon name={n} />
        </ToolButton>
      )
    )}
  </>
);

const WindowButtons = ({ color, faded }: { color: string; faded: string }) => (
  <>
    <WindowButton aria-label="Свернуть">
      <svg width="11" height="11" stroke={color}><path d="M0 5.500h10" /></svg>
    </WindowButton>
    <WindowButton aria-label="Развернуть">
      <svg width="11" height="11" fill="none" stroke={faded}><path d="M.500.500h9v9h-9z" /></svg>
    </WindowButton>
    <WindowButton aria-label="Закрыть">
      <svg width="11" height="11" stroke={color}><path d="M.500.500l10 10M10.500.500l-10 10" /></svg>
    </WindowButton>
  </>
);

export default function App() {
  return (
    <>
      <GlobalStyle />
      <Defs aria-hidden="true">
        <defs>
          <linearGradient id="fold" x1="0" y1=".7" x2="1" y2=".3">
            <stop offset=".1" stopColor="#ffff10" />
            <stop offset=".5" stopColor="#ffd015" />
            <stop offset="1" stopColor="#ff8a08" />
          </linearGradient>
          <linearGradient id="fold2" x1="0" y1="1" x2="0" y2="0">
            <stop offset="0" stopColor="#ffe75a" />
            <stop offset=".5" stopColor="#fff6a0" />
            <stop offset="1" stopColor="#f8c830" />
          </linearGradient>
          <linearGradient id="olive" x1="0" y1="0" x2="0" y2="1">
            <stop offset="0" stopColor="#d6e58c" />
            <stop offset="1" stopColor="#a8c040" />
          </linearGradient>
          <pattern id="selDither" width="2" height="2" patternUnits="userSpaceOnUse">
            <path d="M0 0h2v2H0z" fill="#2f7fa0" />
            <path d="M0 0h1v1H0zM1 1h1v1H1z" fill="#7ab648" />
          </pattern>
          <pattern id="grayDither" width="2" height="2" patternUnits="userSpaceOnUse">
            <path d="M0 0h2v2H0z" fill="#fff" />
            <path d="M0 0h1v1H0zM1 1h1v1H1z" fill="#cfcfcf" />
          </pattern>
        </defs>
      </Defs>

      <Window>
        <TitleBar>
          <Icon name="logo" />
          <Caption>Smeta.RU  11.5.3.2   - [Менеджер]</Caption>
          <WindowButtons color="#999" faded="#999" />
        </TitleBar>

        <MenuBar>
          <Grip />
          <Icon name="logo" />
          <MenuItem><u>С</u>мета</MenuItem>
          {MENU.map((m) => <MenuItem key={m}>{m}</MenuItem>)}
          <MdiButtons>
            <MdiButton aria-label="Свернуть документ">
              <svg width="9" height="9"><path d="M1 7.500h6" stroke="#000" strokeWidth="2" /></svg>
            </MdiButton>
            <MdiButton aria-label="Восстановить документ">
              <svg width="10" height="9" fill="none" stroke="#000">
                <path d="M3.500 3V.500h5v4H7M3 1h6M.500 3.500h5.500v5H.500zM0 4h6" />
              </svg>
            </MdiButton>
            <MdiButton $apart aria-label="Закрыть документ">
              <svg width="9" height="9" stroke="#000" strokeWidth="2"><path d="M1 1l7 7M8 1L1 8" /></svg>
            </MdiButton>
          </MdiButtons>
        </MenuBar>

        <ToolRow>
          <ToolGroup>
            <Grip />
            <Buttons names={["tree", "treeArrow", "|", "excel", "|", "pdf", "|", "magnifier"]} />
          </ToolGroup>
          <ToolGroup>
            <Grip />
            <Buttons names={["hammer", "truck", "bricks", "|", "truckBricks"]} />
          </ToolGroup>
          <ToolGroup>
            <Grip />
            <Buttons
              names={["save", "reloadGray", "undo", "|", "undoDoc", "|", "stackStar", "stackStar2", "bubble", "|", "barrel", "machine"]}
            />
            <TextButton disabled>Формировать шифр...</TextButton>
            <TextButton disabled $pad={6}>Изменить тип строки...</TextButton>
            <Buttons names={["|", "crossGray", "|", "calc", "docPlus", "plusMinusGray", "|", "cut", "copy", "pasteGray", "|"]} />
            <TextButton disabled>Копировать в смету</TextButton>
            <Buttons names={["copyBlank", "paste"]} />
          </ToolGroup>
          <ToolGroup $gap>
            <Grip />
            <Buttons names={["bookGray", "letterP", "letterPP", "|", "treeCheck", "treeCross"]} />
          </ToolGroup>
          <ToolGroup>
            <Grip />
            <EmptySlot />
          </ToolGroup>
          <ToolGroup>
            <Grip />
            <Buttons names={["indentRight", "indentUp", "indentDown", "indentLast"]} />
          </ToolGroup>
          <ToolGroup>
            <Grip />
            <Buttons names={["stackPink", "stackBlue"]} />
          </ToolGroup>
        </ToolRow>

        <ToolRow>
          <ToolGroup>
            <Grip />
            {SECTIONS.map((s) => <TextButton key={s} disabled $pad={4}>{s}</TextButton>)}
            <TextButton $pad={6}>Список открытых окон<Caret /></TextButton>
          </ToolGroup>
        </ToolRow>

        <ToolRow $line>
          <ToolGroup>
            <Grip />
            <TextButton>Справочники</TextButton>
            <Separator />
            <HatchTabs>
              {BOOKS.map((b) => <HatchTab key={b}>{b}</HatchTab>)}
            </HatchTabs>
          </ToolGroup>
        </ToolRow>

        <ToolRow>
          <ToolGroup>
            <Grip />
            <TextButton>Действие</TextButton>
            <TextButton>Вид</TextButton>
            <Buttons names={["|", "folderUp", "folderMinus"]} />
          </ToolGroup>
          <ToolGroup>
            <Grip />
            <Buttons
              names={[
                "reload", "|", "folderCheck", "|", "folderNew", "folderFind", "folderFindYellow", "|",
                "folderEdit", "|", "crossRed", "|", "up", "down", "|", "glasses",
              ]}
            />
          </ToolGroup>
        </ToolRow>

        <Panels>
          <Panel>
            <TabStrip>
              <Tab $on>Структура</Tab>
            </TabStrip>
            <Frame>
              <Sunken>
                <Viewport>
                  <Tree nodes={STRUCTURE} />
                </Viewport>
              </Sunken>
            </Frame>
          </Panel>

          <Panel>
            <TabStrip>
              <Tab $on>Состав</Tab>
              <Tab>Описание</Tab>
            </TabStrip>
            <Frame>
              <Sunken>
                <ScrollArea>
                  <Viewport>
                    <ColumnHeader>Наименование</ColumnHeader>
                    <FolderList items={CONTENTS} indent={18} selected={17} />
                  </Viewport>
                  <ScrollBar vertical parts={[0, 110, 515]} />
                  <ScrollBar parts={[0, 864, 16]} />
                  <Corner />
                </ScrollArea>
              </Sunken>
            </Frame>
          </Panel>
        </Panels>

        <StatusBar>
          <StatusSlot $w={89}><StatusCell /></StatusSlot>
          <StatusSlot $w={300}><StatusCell /></StatusSlot>
          <StatusSlot><StatusCell /></StatusSlot>
          <StatusSlot $w={34}><StatusCell><Icon name="noInfo" /></StatusCell></StatusSlot>
          <StatusSlot $w={34}><StatusCell>RU</StatusCell></StatusSlot>
        </StatusBar>

        <Dialog role="dialog" aria-labelledby="dialog-title">
          <DialogTitle>
            <Icon name="logo" />
            <DialogCaption id="dialog-title">Изменение состава пути поиска  [Расценки]</DialogCaption>
            <WindowButtons color="#fff" faded="#4ba0e8" />
          </DialogTitle>
          <NameRow>
            <NameLabel htmlFor="path-name">Наименование пути</NameLabel>
            <NameInput id="path-name" defaultValue={HISTORY} />
          </NameRow>
          <Columns>
            <Column $top={2}>
              <RoutesHeader>Выбранные поисковые маршруты</RoutesHeader>
              <Sunken>
                <ScrollArea>
                  <Viewport>
                    <FolderList items={ROUTES} indent={2} />
                  </Viewport>
                  <ScrollBar vertical parts={[0, 24, 256]} />
                  <ScrollBar parts={[0, 128, 140]} />
                  <Corner />
                </ScrollArea>
              </Sunken>
              <RouteTools>
                <Buttons names={["reload", "|", "up", "down"]} />
              </RouteTools>
            </Column>
            <Column>
              <TabStrip $h={20}>
                <Tab $on>Расценки</Tab>
              </TabStrip>
              <Frame>
                <Sunken>
                  <ScrollArea>
                    <Viewport>
                      <Tree nodes={RATES} />
                    </Viewport>
                    <ScrollBar vertical parts={[124, 42, 1]} />
                    <ScrollBar parts={[0, 152, 168]} />
                    <Corner />
                  </ScrollArea>
                </Sunken>
              </Frame>
              <Actions>
                <PushButton>Добавить путь в поисковый маршрут</PushButton>
                <PushButton>Добавить путь в поисковый маршрут с подчиненными папками</PushButton>
                <PushButton disabled>Добавить путь в поисковый маршрут с родительскими папками</PushButton>
                <PushButton>Очистить поисковый маршрут</PushButton>
                <Confirm>
                  <PushButton $primary>Сохранить</PushButton>
                  <PushButton>Отмена</PushButton>
                </Confirm>
              </Actions>
            </Column>
          </Columns>
        </Dialog>
      </Window>
    </>
  );
}
